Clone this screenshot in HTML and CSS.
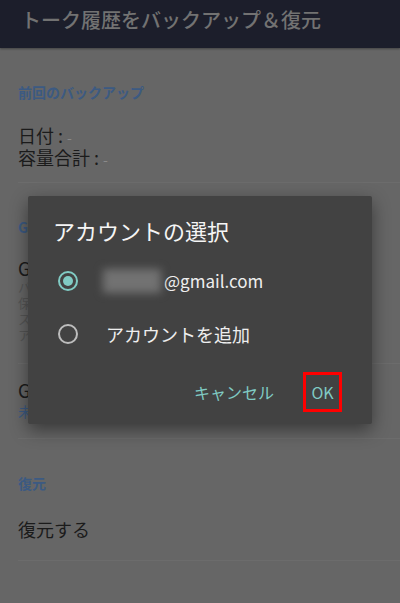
FILE: index.html
```html
<!DOCTYPE html>
<html lang="ja">
<head>
<meta charset="UTF-8">
<meta name="viewport" content="width=device-width, initial-scale=1.0">
<title>トーク履歴をバックアップ＆復元</title>
<link rel="stylesheet" href="styles.css">
</head>
<body>

<div class="header">
    <h1>トーク履歴をバックアップ＆復元</h1>
</div>

<div class="content">
    <div class="section">
        <h2>前回のバックアップ</h2>
        <div class="info">
            <p>日付 : <span class="dash">-</span></p>
            <p>容量合計 : <span class="dash">-</span></p>
        </div>
    </div>

    <div class="section">
        <h2>Google ドライブ</h2>
        <div class="item">
            <p class="item-title">Google ドライブにバック</p>
            <p class="item-desc">バックアップしたトーク<br>保存先のアカウントは<br>スマートフォンに登録<br>アカウントを選択して</p>
        </div>
        <div class="item">
            <p class="item-title">Google アカウント</p>
            <p class="item-value">未設定</p>
        </div>
    </div>

    <div class="section">
        <h2>復元</h2>
        <div class="item single">
            <p class="item-title">復元する</p>
        </div>
    </div>
</div>

<div class="dialog">
    <h3>アカウントの選択</h3>
    <div class="choices">
        <label class="choice">
            <span class="radio checked"></span>
            <span class="choice-text email"><span class="blur"></span>@gmail.com</span>
        </label>
        <label class="choice">
            <span class="radio"></span>
            <span class="choice-text">アカウントを追加</span>
        </label>
    </div>
    <div class="actions">
        <span class="btn">キャンセル</span>
        <span class="btn ok">OK</span>
    </div>
</div>

</body>
</html>
```

FILE: styles.css
```css
body {
    margin: 0;
    background: #666666;
    font-family: "Noto Sans CJK JP", Roboto, sans-serif;
    color: #1b1b1b;
    overflow: hidden;
}
p, h1, h2, h3 {
    margin: 0;
    font-weight: normal;
}
.header {
    height: 48px;
    background: #1c1e2b;
    box-shadow: 0 1px 2px rgba(0, 0, 0, 0.35);
    padding: 6px 0 0 21px;
    box-sizing: border-box;
}
.header h1 {
    font-size: 20px;
    font-weight: 500;
    line-height: 28px;
    color: #727272;
    white-space: nowrap;
}
.content {
    padding-left: 18px;
}
.section {
    border-bottom: 1px solid #6c6c6c;
}
.section h2 {
    font-size: 14px;
    font-weight: bold;
    line-height: 20px;
    color: #3c5a82;
    margin-top: 34px;
}
.info {
    padding: 22px 0 14px;
}
.info p {
    font-size: 18px;
    line-height: 22px;
}
.dash {
    font-size: 14px;
    line-height: 1;
    color: #8a8a8a;
}
.item {
    padding: 20px 0 20px;
    border-bottom: 1px solid #6c6c6c;
}
.item:last-child {
    border-bottom: none;
}
.item + .item {
    padding: 15px 0 17px;
}
.item-title {
    font-size: 18px;
    line-height: 22px;
}
.item-desc {
    font-size: 13px;
    line-height: 16px;
    color: #555555;
}
.item-value {
    font-size: 14px;
    line-height: 20px;
    color: #3c5a82;
}
.item.single {
    padding: 25px 0 20px;
}

/* dialog */
.dialog {
    position: absolute;
    left: 28px;
    top: 196px;
    width: 344px;
    height: 228px;
    background: #424242;
    border-radius: 2px;
    box-shadow: 0 6px 18px rgba(0, 0, 0, 0.45);
    box-sizing: border-box;
    padding: 20px 0 12px;
    display: flex;
    flex-direction: column;
}
.dialog h3 {
    font-size: 22px;
    line-height: 28px;
    color: #f5f5f5;
    padding-left: 25px;
}
.choices {
    margin-top: 10px;
    display: flex;
    flex-direction: column;
}
.choice {
    height: 53px;
    display: flex;
    align-items: center;
    padding-left: 30px;
}
.radio {
    width: 16px;
    height: 16px;
    border: 2px solid #bdbdbd;
    border-radius: 50%;
    display: flex;
    align-items: center;
    justify-content: center;
    flex-shrink: 0;
}
.radio.checked {
    border-color: #80cbc4;
}
.radio.checked::after {
    content: "";
    width: 10px;
    height: 10px;
    border-radius: 50%;
    background: #80cbc4;
}
.choice-text {
    margin-left: 28px;
    font-size: 18px;
    color: #eeeeee;
    display: flex;
    align-items: center;
}
.choice-text.email {
    font-size: 17px;
}
.blur {
    display: inline-block;
    width: 58px;
    height: 24px;
    margin: 0 3px 0 -3px;
    background: #727272;
    filter: blur(4px);
}
.actions {
    margin-top: auto;
    display: flex;
    justify-content: flex-end;
    align-items: center;
    gap: 29px;
    padding-right: 30px;
}
.btn {
    font-size: 16px;
    color: #80cbc4;
    line-height: 40px;
}
.btn.ok {
    width: 39px;
    height: 40px;
    box-sizing: border-box;
    border: 3px solid #ff0000;
    text-align: center;
    line-height: 34px;
}
```
